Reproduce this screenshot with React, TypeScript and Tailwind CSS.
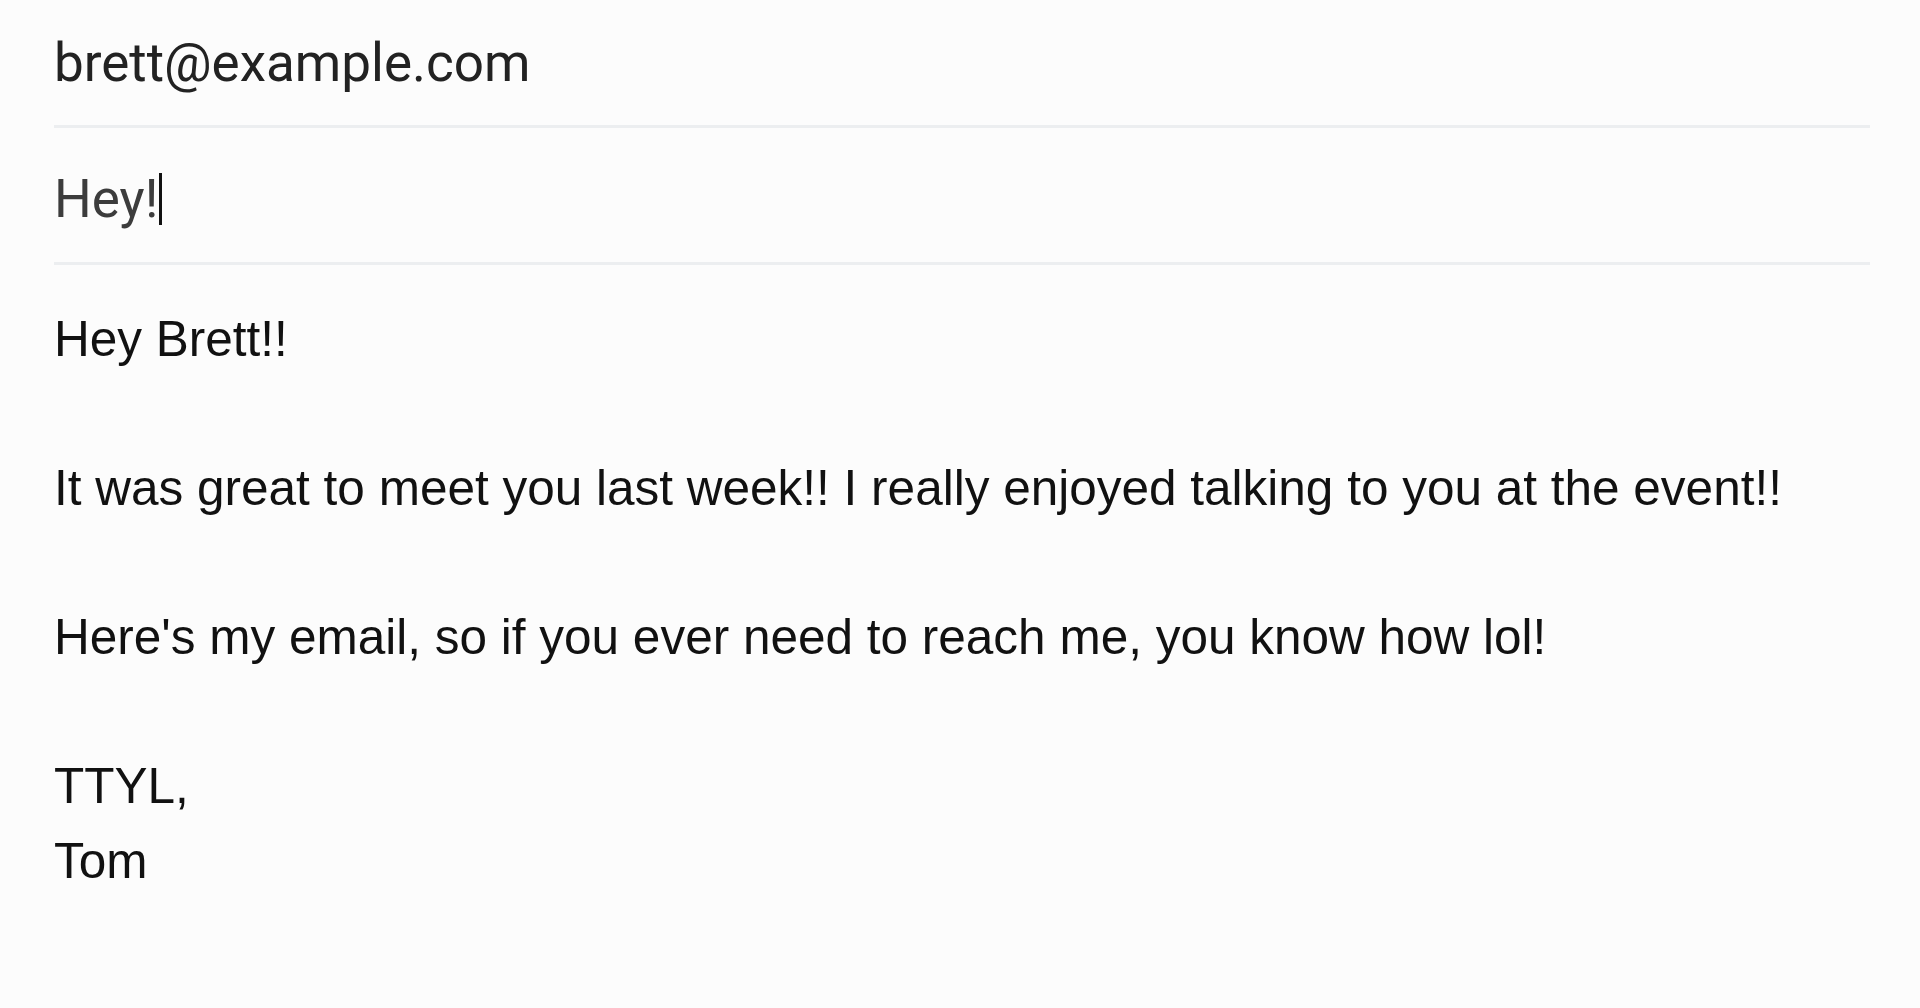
import React from "react";

const bodyLines = [
  "Hey Brett!!",
  "",
  "It was great to meet you last week!! I really enjoyed talking to you at the event!!",
  "",
  "Here's my email, so if you ever need to reach me, you know how lol!",
  "",
  "TTYL,",
  "Tom",
];

const App = () => {
  return (
    <div className="min-h-screen w-full bg-[#fcfcfc] pl-[54px] pr-[50px]">
      {/* recipient */}
      <div className="border-b-[3px] border-[#eceef0] pt-[32px] pb-[31px]">
        <div className="font-['Roboto',sans-serif] text-[53px] leading-[62px] text-[#222]">
          brett@example.com
        </div>
      </div>

      {/* subject */}
      <div className="border-b-[3px] border-[#eceef0] pt-[40px] pb-[32px]">
        <div className="flex items-center font-['Roboto',sans-serif] text-[53px] leading-[62px] text-[#3c3c3c]">
          <span>Hey!</span>
          <span className="ml-[1px] inline-block h-[52px] w-[3px] bg-[#111]" />
        </div>
      </div>

      {/* message body */}
      <div className="pt-[37px] font-['Liberation_Sans',Arial,sans-serif] text-[49.5px] leading-[74.5px] text-[#111]">
        {bodyLines.map((line, i) => (
          <div key={i}>{line || <br />}</div>
        ))}
      </div>
    </div>
  );
};

export default App;
